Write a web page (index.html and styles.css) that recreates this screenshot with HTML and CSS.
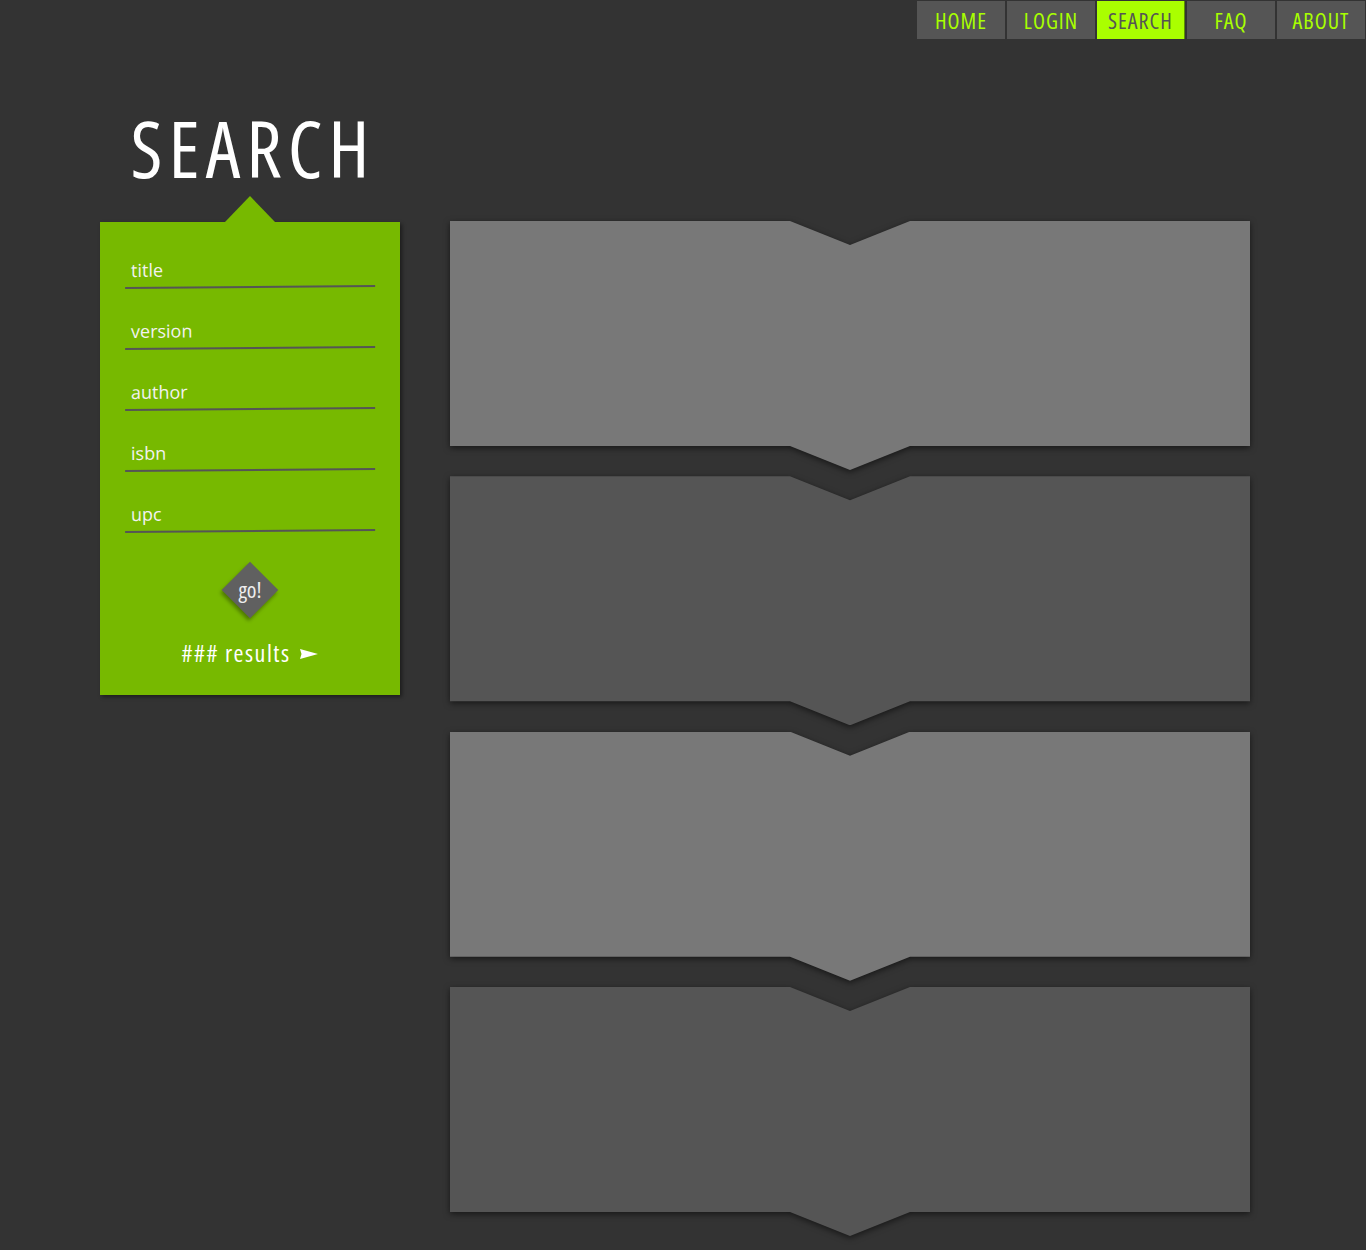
FILE: index.html
```html
<!DOCTYPE html>
<html>
<head>
<meta charset="utf-8">
<title>Search</title>
<link rel="stylesheet" href="styles.css">
</head>
<body>
<nav class="topnav">
  <a class="nav-item">HOME</a>
  <a class="nav-item">LOGIN</a>
  <a class="nav-item active">SEARCH</a>
  <a class="nav-item">FAQ</a>
  <a class="nav-item">ABOUT</a>
</nav>
<main class="page">
  <h1 class="page-title">SEARCH</h1>
  <aside class="search-panel">
    <div class="fields">
      <label class="field"><span class="field-label">title</span></label>
      <label class="field"><span class="field-label">version</span></label>
      <label class="field"><span class="field-label">author</span></label>
      <label class="field"><span class="field-label">isbn</span></label>
      <label class="field"><span class="field-label">upc</span></label>
    </div>
    <div class="go-wrap"><div class="go-diamond"></div><span class="go-text">go!</span></div>
    <div class="results-count">### results <svg class="arrow" width="18" height="10" viewBox="0 0 18 10"><polygon points="0,0 18,5 0,10 1.5,5" fill="#fff"/></svg></div>
  </aside>
  <section class="results">
    <div class="card-wrap"><div class="card light"></div></div>
    <div class="card-wrap"><div class="card dark"></div></div>
    <div class="card-wrap"><div class="card light"></div></div>
    <div class="card-wrap"><div class="card dark"></div></div>
  </section>
</main>
</body>
</html>
```
FILE: styles.css
```css
html, body {
  margin: 0;
  padding: 0;
  background: #333333;
}
body {
  font-family: "Open Sans", "Noto Sans", sans-serif;
  min-height: 1250px;
}
.topnav {
  display: flex;
  justify-content: flex-end;
  gap: 2px;
  padding: 1px 1px 0 0;
  height: 38px;
}
.nav-item {
  width: 88px;
  height: 38px;
  background: #555555;
  color: #a8ff00;
  font-family: "Open Sans", sans-serif;
  font-stretch: 75%;
  font-weight: 400;
  font-size: 22px;
  line-height: 38px;
  letter-spacing: 1px;
  text-align: center;
  box-sizing: border-box;
}
.nav-item.active {
  background: #aaff00;
  color: #555555;
  border-right: 1px solid #5a8f00;
}
.page {
  display: grid;
  grid-template-columns: 300px 800px;
  grid-template-rows: 182px auto;
  column-gap: 50px;
  padding-left: 100px;
}
.page-title {
  grid-column: 1;
  grid-row: 1;
  margin: 0;
  padding-top: 70px;
  padding-left: 6px;
  box-sizing: border-box;
  height: 182px;
  text-align: center;
  color: #ffffff;
  font-family: "Open Sans", sans-serif;
  font-stretch: 75%;
  font-weight: 400;
  font-size: 78px;
  line-height: 78px;
  letter-spacing: 6px;
}
.search-panel {
  grid-column: 1;
  grid-row: 2;
  align-self: start;
  position: relative;
  margin-top: 1px;
  background: #77b900;
  height: 473px;
  box-sizing: border-box;
  padding-top: 36px;
  box-shadow: 2px 2px 4px rgba(0,0,0,0.45);
}
.search-panel::before {
  content: "";
  position: absolute;
  top: -26px;
  left: 125px;
  border-left: 25px solid transparent;
  border-right: 25px solid transparent;
  border-bottom: 26px solid #77b900;
}
.fields {
  display: flex;
  flex-direction: column;
  gap: 31px;
  margin: 0 25px;
}
.field {
  display: block;
  padding-bottom: 5px;
  border-bottom: 2px solid #555555;
  transform: rotate(-0.45deg);
}
.field-label {
  display: block;
  padding-left: 6px;
  color: #f2f2f2;
  font-size: 18px;
  line-height: 23px;
}
.go-wrap {
  position: relative;
  width: 40px;
  height: 40px;
  margin: 38px auto 0;
  display: flex;
  align-items: center;
  justify-content: center;
}
.go-diamond {
  position: absolute;
  inset: 0;
  background: #606060;
  transform: rotate(45deg);
  box-shadow: 1px 3px 4px rgba(0,0,0,0.35);
}
.go-text {
  position: relative;
  color: #eeeeee;
  font-family: "Open Sans", sans-serif;
  font-stretch: 75%;
  font-size: 22px;
  line-height: 22px;
  margin-top: -2px;
}
.results-count {
  margin-top: 29px;
  text-align: center;
  color: #ffffff;
  font-family: "Open Sans", sans-serif;
  font-stretch: 75%;
  font-weight: 500;
  font-size: 24px;
  line-height: 28px;
  letter-spacing: 1.5px;
}
.arrow {
  vertical-align: 3px;
  margin-left: 4px;
}
.results {
  grid-column: 2;
  grid-row: 2;
  display: flex;
  flex-direction: column;
  gap: 6.33px;
}
.card-wrap {
  filter: drop-shadow(0 2px 3px rgba(0,0,0,0.55));
}
.card {
  height: 249px;
  clip-path: polygon(0 0, 340px 0, 400px 24px, 460px 0, 100% 0, 100% 225px, 460px 225px, 400px 249px, 340px 225px, 0 225px);
}
.card.light { background: #787878; }
.card.dark { background: #555555; }
```
